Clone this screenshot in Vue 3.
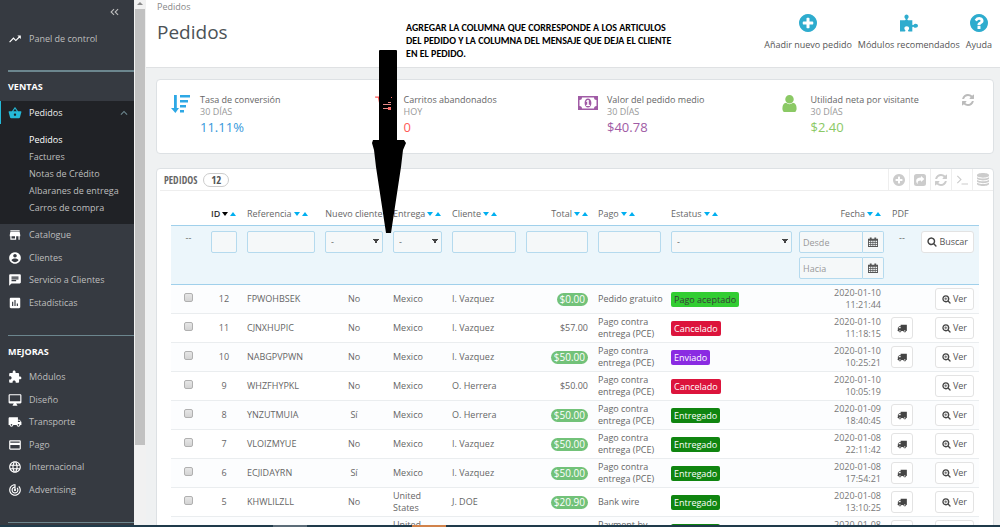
<script setup>
import { h, ref } from 'vue'

const icons = {
  trend: { d: 'M16 6l2.29 2.29-4.88 4.88-4-4L2 16.59 3.41 18l6-6 4 4 6.3-6.29L22 12V6z' },
  basket: { d: 'M17.21 9l-4.38-6.56c-.19-.28-.51-.42-.83-.42-.32 0-.64.14-.83.43L6.79 9H2c-.55 0-1 .45-1 1 0 .09.01.18.04.27l2.54 9.27c.23.84 1 1.46 1.92 1.46h13c.92 0 1.69-.62 1.93-1.46l2.54-9.27L23 10c0-.55-.45-1-1-1h-4.79zM9 9l3-4.4L15 9H9zm3 8c-1.1 0-2-.9-2-2s.9-2 2-2 2 .9 2 2-.9 2-2 2z' },
  up: { d: 'M7.41 15.41L12 10.83l4.59 4.58L18 14l-6-6-6 6z' },
  store: { d: 'M20 4H4v2h16V4zm1 10v-2l-1-5H4l-1 5v2h1v6h10v-6h4v6h2v-6h1zm-9 4H6v-4h6v4z' },
  account: { d: 'M12 2C6.48 2 2 6.48 2 12s4.48 10 10 10 10-4.48 10-10S17.52 2 12 2zm0 3c1.66 0 3 1.34 3 3s-1.34 3-3 3-3-1.34-3-3 1.34-3 3-3zm0 14.2c-2.5 0-4.71-1.28-6-3.22.03-1.99 4-3.08 6-3.08 1.99 0 5.97 1.09 6 3.08-1.29 1.94-3.5 3.22-6 3.22z' },
  chat: { d: 'M20 2H4c-1.1 0-1.99.9-1.99 2L2 22l4-4h14c1.1 0 2-.9 2-2V4c0-1.1-.9-2-2-2zM6 9h12v2H6V9zm8 5H6v-2h8v2zm4-6H6V6h12v2z' },
  chart: { d: 'M19 3H5c-1.1 0-2 .9-2 2v14c0 1.1.9 2 2 2h14c1.1 0 2-.9 2-2V5c0-1.1-.9-2-2-2zM9 17H7v-7h2v7zm4 0h-2V7h2v10zm4 0h-2v-4h2v4z' },
  extension: { d: 'M20.5 11H19V7c0-1.1-.9-2-2-2h-4V3.5C13 2.12 11.88 1 10.5 1S8 2.12 8 3.5V5H4c-1.1 0-1.99.9-1.99 2v3.8H3.5c1.49 0 2.7 1.21 2.7 2.7s-1.21 2.7-2.7 2.7H2V20c0 1.1.9 2 2 2h3.8v-1.5c0-1.49 1.21-2.7 2.7-2.7 1.49 0 2.7 1.21 2.7 2.7V22H17c1.1 0 2-.9 2-2v-4h1.5c1.38 0 2.5-1.12 2.5-2.5S21.88 11 20.5 11z' },
  desktop: { d: 'M21 2H3c-1.1 0-2 .9-2 2v12c0 1.1.9 2 2 2h7l-2 3v1h8v-1l-2-3h7c1.1 0 2-.9 2-2V4c0-1.1-.9-2-2-2zm0 12H3V4h18v10z' },
  shipping: { d: 'M20 8h-3V4H3c-1.1 0-2 .9-2 2v11h2c0 1.66 1.34 3 3 3s3-1.34 3-3h6c0 1.66 1.34 3 3 3s3-1.34 3-3h2v-5l-3-4zM6 18.5c-.83 0-1.5-.67-1.5-1.5s.67-1.5 1.5-1.5 1.5.67 1.5 1.5-.67 1.5-1.5 1.5zm13.5-9l1.96 2.5H17V9.5h2.5zm-1.5 9c-.83 0-1.5-.67-1.5-1.5s.67-1.5 1.5-1.5 1.5.67 1.5 1.5-.67 1.5-1.5 1.5z' },
  payment: { d: 'M20 4H4c-1.11 0-1.99.89-1.99 2L2 18c0 1.11.89 2 2 2h16c1.11 0 2-.89 2-2V6c0-1.11-.89-2-2-2zm0 14H4v-6h16v6zm0-10H4V6h16v2z' },
  globe: { d: 'M11.99 2C6.47 2 2 6.48 2 12s4.47 10 9.99 10C17.52 22 22 17.52 22 12S17.52 2 11.99 2zm6.93 6h-2.95c-.32-1.25-.78-2.45-1.38-3.56 1.84.63 3.37 1.91 4.33 3.56zM12 4.04c.83 1.2 1.48 2.53 1.91 3.96h-3.82c.43-1.43 1.08-2.76 1.91-3.96zM4.26 14C4.1 13.36 4 12.69 4 12s.1-1.36.26-2h3.38c-.08.66-.14 1.32-.14 2 0 .68.06 1.34.14 2H4.26zm.82 2h2.95c.32 1.25.78 2.45 1.38 3.56-1.84-.63-3.37-1.9-4.33-3.56zm2.95-8H5.08c.96-1.66 2.49-2.93 4.33-3.56C8.81 5.55 8.35 6.75 8.03 8zM12 19.96c-.83-1.2-1.48-2.53-1.91-3.96h3.82c-.43 1.43-1.08 2.76-1.91 3.96zM14.34 14H9.66c-.09-.66-.16-1.32-.16-2 0-.68.07-1.35.16-2h4.68c.09.65.16 1.32.16 2 0 .68-.07 1.34-.16 2zm.25 5.56c.6-1.11 1.06-2.31 1.38-3.56h2.95c-.96 1.65-2.49 2.93-4.33 3.56zM16.36 14c.08-.66.14-1.32.14-2 0-.68-.06-1.34-.14-2h3.38c.16.64.26 1.31.26 2s-.1 1.36-.26 2h-3.38z' },
  target: { d: 'M19.07 4.93l-1.41 1.41C19.1 7.79 20 9.79 20 12c0 4.42-3.58 8-8 8s-8-3.58-8-8c0-4.08 3.05-7.44 7-7.93v2.02C8.16 6.57 6 9.03 6 12c0 3.31 2.69 6 6 6s6-2.69 6-6c0-1.66-.67-3.16-1.76-4.24l-1.41 1.41C15.55 9.9 16 10.9 16 12c0 2.21-1.79 4-4 4s-4-1.79-4-4c0-1.86 1.28-3.41 3-3.86v2.14c-.6.35-1 .98-1 1.72 0 1.1.9 2 2 2s2-.9 2-2c0-.74-.4-1.38-1-1.72V2h-1C6.48 2 2 6.48 2 12s4.48 10 10 10 10-4.48 10-10c0-2.76-1.12-5.26-2.93-7.07z' },
  plus: { box: '128 128 1536 1536', d: 'M1344 960v-128q0-26-19-45t-45-19h-256v-256q0-26-19-45t-45-19h-128q-26 0-45 19t-19 45v256h-256q-26 0-45 19t-19 45v128q0 26 19 45t45 19h256v256q0 26 19 45t45 19h128q26 0 45-19t19-45v-256h256q26 0 45-19t19-45zm320-64q0 209-103 385.5t-279.5 279.5-385.5 103-385.5-103-279.5-279.5-103-385.5 103-385.5 279.5-279.5 385.5-103 385.5 103 279.5 279.5 103 385.5z' },
  help: { box: '128 128 1536 1536', d: 'M1024 1376v-192q0-14-9-23t-23-9h-192q-14 0-23 9t-9 23v192q0 14 9 23t23 9h192q14 0 23-9t9-23zm256-672q0-88-55.5-163t-138.5-116-170-41q-243 0-371 213-15 24 8 42l132 100q7 6 19 6 16 0 25-12 53-68 86-92 34-24 86-24 48 0 85.5 26t37.5 59q0 38-20 61t-68 45q-63 28-115.5 86.5t-52.5 125.5v36q0 14 9 23t23 9h192q14 0 23-9t9-23q0-19 21.5-49.5t54.5-49.5q32-18 49-28.5t46-35 44.5-48 28-60.5 12.5-81zm384 192q0 209-103 385.5t-279.5 279.5-385.5 103-385.5-103-279.5-279.5-103-385.5 103-385.5 279.5-279.5 385.5-103 385.5 103 279.5 279.5 103 385.5z' },
  puzzle: { box: '0 0 19 18', d: 'M0 6h5.2c.8 0 1-.5.7-1.1C5.2 4 4.700 3.500 4.700 2.400 4.700 1 5.700 0 6.900 0s2.200 1 2.200 2.400c0 1.100-.5 1.600-1.200 2.500-.3.6-.1 1.100.7 1.100H13v4.200c0 1 .7 1.200 1.400.6.6-.6 1.100-.9 2-.9 1.400 0 2.600.9 2.600 2.100s-1.200 2.100-2.600 2.100c-.9 0-1.400-.3-2-.9-.7-.6-1.400-.4-1.400.6V18H9.300c-1-.3-1.100-1-.5-1.600.6-.7.8-1.100.8-1.900 0-1.300-1-2.100-2.500-2.100s-2.500.8-2.500 2.100c0 .8.200 1.200.8 1.900.6.6.5 1.300-.5 1.600H0z' },
  refresh: { box: '128 128 1536 1536', d: 'M1639 1056q0 5-1 7-64 268-268 434.5t-478 166.5q-146 0-282.5-55t-243.5-157l-129 129q-19 19-45 19t-45-19-19-45v-448q0-26 19-45t45-19h448q26 0 45 19t19 45-19 45l-137 137q71 66 161 102t187 36q134 0 250-65t186-179q11-17 53-117 8-23 30-23h192q13 0 22.5 9.5t9.5 22.5zm25-800v448q0 26-19 45t-45 19h-448q-26 0-45-19t-19-45 19-45l138-138q-148-137-349-137-134 0-250 65t-186 179q-11 17-53 117-8 23-30 23h-199q-13 0-22.5-9.5t-9.5-22.5v-7q65-268 270-434.5t480-166.5q146 0 284 55.5t245 156.5l130-129q19-19 45-19t45 19 19 45z' },
  share: { box: '0 0 12 12', d: 'M2.500 0h7A2.500 2.500 0 0 1 12 2.500v7A2.500 2.500 0 0 1 9.500 12h-7A2.500 2.500 0 0 1 0 9.500v-7A2.500 2.500 0 0 1 2.500 0zM7 2v1.600C3.500 3.600 2.200 5 2.200 7c0 1.300.7 2.300 1.500 3C3.400 7.500 4.200 6.400 7 6.400V8l3.400-3z' },
  terminal: { box: '0 0 13 12', d: 'M1 2l.9-.9L6.200 5.500 1.900 9.900 1 9l3.500-3.500zM6 9.700h7V11H6z' },
  database: { box: '0 0 12 13', d: 'M6 0c3.300 0 6 .9 6 2v.8C12 3.900 9.300 4.700 6 4.700S0 3.900 0 2.800V2C0 .9 2.700 0 6 0zM0 4.300c1.300.9 3.600 1.200 6 1.200s4.700-.3 6-1.200v1.300c0 1.100-2.700 1.900-6 1.900S0 6.700 0 5.600zM0 7c1.300.9 3.600 1.300 6 1.300S10.700 7.900 12 7v1.300c0 1.100-2.700 1.900-6 1.900S0 9.400 0 8.300zM0 9.700c1.300.9 3.600 1.300 6 1.300s4.700-.4 6-1.300V11c0 1.100-2.700 2-6 2s-6-.9-6-2z' },
  calendar: { box: '0 0 11 11', d: 'M0 2h2V.500h2V2h3V.500h2V2h2v9H0zM1 4v1.500h1.600V4zm2.400 0v1.500H5V4zm2.400 0v1.500h1.700V4zm2.500 0v1.500H10V4zM1 6.200v1.500h1.600V6.200zm2.400 0v1.500H5V6.200zm2.400 0v1.500h1.700V6.200zm2.500 0v1.500H10V6.200zM1 8.400v1.500h1.600V8.400zm2.400 0v1.500H5V8.400zm2.400 0v1.500h1.700V8.400zm2.500 0v1.500H10V8.400z' },
  search: { box: '0 64 1792 1792', d: 'M1216 832q0-185-131.5-316.5t-316.5-131.5-316.5 131.5-131.5 316.5 131.5 316.5 316.5 131.5 316.5-131.5 131.5-316.5zm512 832q0 52-38 90t-90 38q-54 0-90-38l-343-342q-179 124-399 124-143 0-273.5-55.5t-225-150-150-225-55.5-273.5 55.5-273.5 150-225 225-150 273.5-55.5 273.5 55.5 225 150 150 225 55.5 273.5q0 220-124 399l343 343q37 37 37 90z' },
  zoom: { box: '0 64 1792 1792', d: 'M1088 800v64q0 13-9.5 22.5t-22.5 9.5h-224v224q0 13-9.5 22.5t-22.5 9.5h-64q-13 0-22.5-9.5t-9.5-22.5v-224h-224q-13 0-22.5-9.5t-9.5-22.5v-64q0-13 9.5-22.5t22.5-9.5h224v-224q0-13 9.5-22.5t22.5-9.5h64q13 0 22.5 9.5t9.5 22.5v224h224q13 0 22.5 9.5t9.5 22.5zm128 32q0-185-131.5-316.5t-316.5-131.5-316.5 131.5-131.5 316.5 131.5 316.5 316.5 131.5 316.5-131.5 131.5-316.5zm512 832q0 52-38 90t-90 38q-54 0-90-38l-343-342q-179 124-399 124-143 0-273.5-55.5t-225-150-150-225-55.5-273.5 55.5-273.5 150-225 225-150 273.5-55.5 273.5 55.5 225 150 150 225 55.5 273.5q0 220-124 399l343 343q37 37 37 90z' },
  truck: { box: '0 128 1792 1664', d: 'M640 1408q0-52-38-90t-90-38-90 38-38 90 38 90 90 38 90-38 38-90zm-384-512h384v-256h-158q-13 0-22 9l-195 195q-9 9-9 22v30zm1280 512q0-52-38-90t-90-38-90 38-38 90 38 90 90 38 90-38 38-90zm256-1088v1024q0 15-4 26.5t-13.5 18.5-16.5 11.5-23.5 6-22.5 2-25.5 0-22.5-.5q0 106-75 181t-181 75-181-75-75-181h-384q0 106-75 181t-181 75-181-75-75-181h-64q-3 0-22.5.5t-25.5 0-22.5-2-23.5-6-16.5-11.5-13.5-18.5-4-26.5q0-26 19-45t45-19v-320q0-8-.5-35t0-38 2.5-34.5 6.5-37 14-30.5 22.5-30l198-198q19-19 50.5-32t58.5-13h160v-192q0-26 19-45t45-19h1024q26 0 45 19t19 45z' },
  sort: { box: '0 0 20 20', d: 'M3 1h2.800v13H8l-3.600 5L0 14h3zM9 1h10v2.600H9zm0 5h8v2.600H9zm0 5h6v2.600H9zm0 5h4v2.600H9z' },
  cart: { box: '64 256 1664 1408', d: 'M704 1536q0 52-38 90t-90 38-90-38-38-90 38-90 90-38 90 38 38 90zm896 0q0 52-38 90t-90 38-90-38-38-90 38-90 90-38 90 38 38 90zm128-1088v512q0 24-16.5 42.5t-40.5 21.5l-1044 122q13 60 13 70 0 16-24 64h920q26 0 45 19t19 45-19 45-45 19h-1024q-26 0-45-19t-19-45q0-11 8-31.5t16-36 21.5-40 15.5-29.5l-177-823h-204q-26 0-45-19t-19-45 19-45 45-19h256q16 0 28.5 6.5t19.5 15.5 13 24.5 8 26 5.5 29.5 4.5 26h1201q26 0 45 19t19 45z' },
  money: { box: '0 0 20 14', d: 'M0 0h20v14H0zM4 1.500A2.500 2.500 0 0 1 1.500 4v6A2.500 2.500 0 0 1 4 12.500h12a2.500 2.500 0 0 1 2.500-2.500V4A2.500 2.500 0 0 1 16 1.500zM10 2.500c2 0 3.400 2 3.400 4.500s-1.400 4.500-3.400 4.500S6.600 9.500 6.600 7 8 2.500 10 2.500zM9.400 4L8 5.200l.6.8.6-.4v3.200H8.100V10h3.900V8.800h-1.200V4z' },
  user: { box: '256 128 1280 1536', d: 'M1536 1399q0 109-62.500 187t-150.500 78h-854q-88 0-150.500-78t-62.500-187q0-85 8.500-160.500t31.500-152 58.500-131 94-89 134.500-34.500q131 128 313 128t313-128q76 0 134.500 34.500t94 89 58.500 131 31.500 152 8.500 160.500zm-256-887q0 159-112.500 271.500t-271.500 112.500-271.500-112.500-112.500-271.500 112.500-271.500 271.500-112.500 271.500 112.500 112.500 271.500z' }
}

const Icon = (props) => {
  const icon = icons[props.name]
  return h('svg', { viewBox: icon.box || '0 0 24 24', fill: 'currentColor', 'fill-rule': 'evenodd', 'aria-hidden': 'true' }, [h('path', { d: icon.d })])
}
Icon.props = ['name']

const submenu = ['Pedidos', 'Factures', 'Notas de Crédito', 'Albaranes de entrega', 'Carros de compra']
const sales = [
  { icon: 'store', label: 'Catalogue' },
  { icon: 'account', label: 'Clientes' },
  { icon: 'chat', label: 'Servicio a Clientes' },
  { icon: 'chart', label: 'Estadísticas' }
]
const improve = [
  { icon: 'extension', label: 'Módulos' },
  { icon: 'desktop', label: 'Diseño' },
  { icon: 'shipping', label: 'Transporte' },
  { icon: 'payment', label: 'Pago' },
  { icon: 'globe', label: 'Internacional' },
  { icon: 'target', label: 'Advertising' }
]
const actions = [
  { icon: 'plus', label: 'Añadir nuevo pedido' },
  { icon: 'puzzle', label: 'Módulos recomendados' },
  { icon: 'help', label: 'Ayuda' }
]
const kpis = [
  { icon: 'sort', title: 'Tasa de conversión', period: '30 DÍAS', value: '11.11%', tone: 'blue' },
  { icon: 'cart', title: 'Carritos abandonados', period: 'HOY', value: '0', tone: 'red' },
  { icon: 'money', title: 'Valor del pedido medio', period: '30 DÍAS', value: '$40.78', tone: 'purple' },
  { icon: 'user', title: 'Utilidad neta por visitante', period: '30 DÍAS', value: '$2.40', tone: 'green' }
]
const tools = [
  { icon: 'plus', label: 'Añadir' },
  { icon: 'share', label: 'Exportar' },
  { icon: 'refresh', label: 'Actualizar' },
  { icon: 'terminal', label: 'Consola SQL' },
  { icon: 'database', label: 'Gestor SQL' }
]
const columns = [
  { key: 'check', label: '' },
  { key: 'id', label: 'ID', sort: true, active: true },
  { key: 'refn', label: 'Referencia', sort: true },
  { key: 'fresh', label: 'Nuevo cliente' },
  { key: 'country', label: 'Entrega', sort: true },
  { key: 'client', label: 'Cliente', sort: true },
  { key: 'total', label: 'Total', sort: true },
  { key: 'pay', label: 'Pago', sort: true },
  { key: 'status', label: 'Estatus', sort: true },
  { key: 'date', label: 'Fecha', sort: true },
  { key: 'pdf', label: 'PDF' },
  { key: 'action', label: '' }
]
const PCE = ['Pago contra', 'entrega (PCE)']
const make = (id, code, fresh, country, client, total, paid, pay, status, tone, day, time, pdf) =>
  ({ id, code, fresh, country, client, total, paid, pay, status, tone, day, time, pdf, checked: false })
const orders = ref([
  make(12, 'FPWOHBSEK', 'No', 'Mexico', 'I. Vazquez', '$0.00', true, ['Pedido gratuito'], 'Pago aceptado', 'accepted', '2020-01-10', '11:21:44', false),
  make(11, 'CJNXHUPIC', 'No', 'Mexico', 'I. Vazquez', '$57.00', false, PCE, 'Cancelado', 'cancelled', '2020-01-10', '11:18:15', true),
  make(10, 'NABGPVPWN', 'No', 'Mexico', 'I. Vazquez', '$50.00', true, PCE, 'Enviado', 'sent', '2020-01-10', '10:25:21', true),
  make(9, 'WHZFHYPKL', 'No', 'Mexico', 'O. Herrera', '$50.00', false, PCE, 'Cancelado', 'cancelled', '2020-01-10', '10:05:19', false),
  make(8, 'YNZUTMUIA', 'Sí', 'Mexico', 'O. Herrera', '$50.00', true, PCE, 'Entregado', 'delivered', '2020-01-09', '18:40:45', true),
  make(7, 'VLOIZMYUE', 'No', 'Mexico', 'I. Vazquez', '$50.00', true, PCE, 'Entregado', 'delivered', '2020-01-08', '22:11:42', true),
  make(6, 'ECJIDAYRN', 'Sí', 'Mexico', 'I. Vazquez', '$50.00', true, PCE, 'Entregado', 'delivered', '2020-01-08', '17:54:21', true),
  make(5, 'KHWLILZLL', 'No', 'United States', 'J. DOE', '$20.90', true, ['Bank wire'], 'Entregado', 'delivered', '2020-01-08', '13:10:25', true),
  make(4, '', 'No', 'United States', '', '$20.90', true, ['Payment by', 'check'], 'Entregado', 'delivered', '2020-01-08', '13:10:25', true)
])
</script>

<template>
  <div class="app">
    <aside class="sidebar">
      <button class="collapse" type="button" aria-label="Contraer menú">
        <svg viewBox="0 0 10 8" fill="none" stroke="currentColor" stroke-width="1.2"><path d="M4.500 .7L1.200 4l3.300 3.300M9 .7L5.700 4 9 7.300" /></svg>
      </button>
      <a class="item dashboard" href="#"><Icon name="trend" class="glyph" />Panel de control</a>
      <h2 class="group">VENTAS</h2>
      <div class="open">
        <a class="item current" href="#"><Icon name="basket" class="glyph" />Pedidos<Icon name="up" class="caret" /></a>
        <ul class="submenu">
          <li v-for="(s, i) in submenu" :key="s"><a href="#" :class="{ on: i === 0 }">{{ s }}</a></li>
        </ul>
      </div>
      <nav class="menu sales">
        <a v-for="m in sales" :key="m.label" class="item" href="#"><Icon :name="m.icon" class="glyph" />{{ m.label }}</a>
      </nav>
      <h2 class="group">MEJORAS</h2>
      <nav class="menu improve">
        <a v-for="m in improve" :key="m.label" class="item" href="#"><Icon :name="m.icon" class="glyph" />{{ m.label }}</a>
      </nav>
      <hr class="rule" />
    </aside>
    <div class="scrollbar"><span class="scroll-up"></span><span class="thumb"></span></div>

    <main class="main">
      <header class="head">
        <div>
          <a class="crumb" href="#">Pedidos</a>
          <h1>Pedidos</h1>
        </div>
        <nav class="actions">
          <a v-for="a in actions" :key="a.label" href="#"><Icon :name="a.icon" class="act-icon" />{{ a.label }}</a>
        </nav>
      </header>

      <div class="content">
        <section class="panel kpis">
          <div v-for="k in kpis" :key="k.title" class="kpi" :class="k.tone">
            <div class="kpi-icon"><Icon :name="k.icon" :class="k.icon" /></div>
            <div>
              <div class="kpi-title">{{ k.title }}</div>
              <div class="kpi-period">{{ k.period }}</div>
              <div class="kpi-value">{{ k.value }}</div>
            </div>
          </div>
          <button class="reload" type="button" aria-label="Actualizar"><Icon name="refresh" /></button>
        </section>

        <section class="panel list">
          <div class="list-head">
            <h3>PEDIDOS</h3>
            <span class="count">12</span>
            <div class="tools">
              <button v-for="t in tools" :key="t.label" type="button" :aria-label="t.label"><Icon :name="t.icon" :class="t.icon" /></button>
            </div>
          </div>
          <table>
            <colgroup><col v-for="c in columns" :key="c.key" :class="'w-' + c.key" /></colgroup>
            <thead>
              <tr>
                <th v-for="c in columns" :key="c.key" :class="[c.key, { active: c.active }]">
                  {{ c.label }}<span v-if="c.sort" class="sorts"><i class="down"></i><i class="asc"></i></span>
                </th>
              </tr>
            </thead>
            <tbody>
              <tr class="filters">
                <td class="check">--</td>
                <td><input type="text" aria-label="ID" /></td>
                <td><input type="text" aria-label="Referencia" /></td>
                <td><select aria-label="Nuevo cliente"><option>-</option></select></td>
                <td><select aria-label="Entrega"><option>-</option></select></td>
                <td><input type="text" aria-label="Cliente" /></td>
                <td><input type="text" aria-label="Total" /></td>
                <td><input type="text" aria-label="Pago" /></td>
                <td class="state"><select aria-label="Estatus"><option>-</option></select></td>
                <td class="range">
                  <div class="date-field"><input type="text" placeholder="Desde" aria-label="Desde" /><button type="button" aria-label="Elegir desde"><Icon name="calendar" /></button></div>
                  <div class="date-field"><input type="text" placeholder="Hacia" aria-label="Hacia" /><button type="button" aria-label="Elegir hacia"><Icon name="calendar" /></button></div>
                </td>
                <td class="dashes">--</td>
                <td class="action"><button class="btn find" type="button"><Icon name="search" />Buscar</button></td>
              </tr>
              <tr v-for="o in orders" :key="o.id" class="order">
                <td class="check"><input v-model="o.checked" type="checkbox" :aria-label="'Pedido ' + o.id" /></td>
                <td class="id">{{ o.id }}</td>
                <td>{{ o.code }}</td>
                <td class="fresh">{{ o.fresh }}</td>
                <td class="country">{{ o.country }}</td>
                <td>{{ o.client }}</td>
                <td class="total"><span :class="{ pill: o.paid }">{{ o.total }}</span></td>
                <td class="pay"><div v-for="line in o.pay" :key="line">{{ line }}</div></td>
                <td><span class="badge" :class="o.tone">{{ o.status }}</span></td>
                <td class="date">{{ o.day }}<br />{{ o.time }}</td>
                <td class="pdf"><button v-if="o.pdf" class="btn slip" type="button" aria-label="Albarán"><Icon name="truck" /></button></td>
                <td class="action"><button class="btn" type="button"><Icon name="zoom" />Ver</button></td>
              </tr>
            </tbody>
          </table>
        </section>
      </div>
    </main>

    <p class="note">AGREGAR LA COLUMNA QUE CORRESPONDE A LOS ARTICULOS<br />DEL PEDIDO Y LA COLUMNA DEL MENSAJE QUE DEJA EL CLIENTE<br />EN EL PEDIDO.</p>
    <svg class="arrow" viewBox="0 0 34 184" aria-hidden="true">
      <path d="M7 1q0-1 1-1h16q1 0 1 1v89h7l2 3-3 7-2 17L19 183h-5L4 117 2 100 0 93l1-3h6z" />
      <path d="M11 54.500h8M16 52.500h3M11 58.500h5" fill="none" stroke="#e88a88" stroke-width="1" />
      <path d="M16 57h3v3h-3zM19 47h1v1h-1z" fill="#fc6c68" />
    </svg>
    <div class="taskbar"><span class="task muted"></span><span class="task bright"></span></div>
  </div>
</template>

<style>
body { margin: 0; }
</style>

<style scoped>
* { box-sizing: border-box; }
.app { position: relative; display: flex; height: 100vh; overflow: hidden; background: #eff1f2; color: #666; font: 9px/12px "Open Sans", "Noto Sans", sans-serif; }
a { color: inherit; text-decoration: none; }
button, input, select { font: inherit; color: inherit; margin: 0; }
button { padding: 0; border: 0; background: none; }
svg { display: block; flex: none; }
h1, h2, h3, p, ul { margin: 0; padding: 0; }

.sidebar { flex: none; width: 134px; background: #363a41; color: #bebebe; }
.collapse { display: block; margin: 8px 0 0 110px; color: #bebebe; }
.collapse svg { width: 9px; height: 8px; }
.item { display: flex; align-items: center; gap: 7px; padding-left: 8px; }
.glyph { width: 14px; height: 14px; color: #fff; }
.dashboard { height: 24px; margin-top: 11px; }
.group { margin-left: 8px; border-top: 1px solid #6c868e; color: #fff; font-size: 9px; line-height: 12px; font-weight: 700; }
.dashboard + .group { margin-top: 19px; border-top-width: 2px; padding: 9px 0 8px; }
.open { background: #202226; padding-bottom: 8px; }
.current { height: 23px; border-left: 1px solid #25b9d7; padding-left: 7px; color: #eee; }
.current .glyph { color: #25b9d7; }
.caret { width: 14px; height: 14px; margin-left: auto; margin-right: 3px; color: #6c868e; }
.submenu { list-style: none; padding: 7px 0 0 29px; }
.submenu li { line-height: 17px; }
.submenu .on { color: #fff; }
.menu { display: grid; grid-auto-rows: 1fr; }
.sales { min-height: 90px; margin: 0 0 21px; }
.sales + .group { padding: 10px 0 8px; }
.improve { min-height: 135px; }
.rule { margin: 21px 0 0 8px; border: 0; border-top: 1px solid #6c868e; }

.scrollbar { flex: none; width: 12px; padding: 2px 1px 0; background: #f1f1f1; display: flex; flex-direction: column; }
.scroll-up { align-self: center; border: 3px solid transparent; border-top-width: 0; border-bottom-color: #8a8a8a; margin-bottom: 4px; }
.thumb { height: 83%; background: #c1c1c1; }

.main { flex: 1; min-width: 0; display: flex; flex-direction: column; }
.head { display: flex; justify-content: space-between; height: 68px; padding: 1px 8px 0 11px; background: #fff; border-bottom: 1px solid #dfe1e3; flex: none; }
.crumb { display: block; color: #888; }
h1 { margin-top: 6px; font-size: 19px; line-height: 26px; font-weight: 400; color: #4c5256; }
.actions { display: flex; gap: 6px; padding-top: 13px; color: #555; }
.actions a { display: flex; flex-direction: column; align-items: center; gap: 7px; }
.act-icon { width: 18px; height: 18px; color: #2eacce; }

.content { padding: 11px 6px 0 10px; }
.panel { background: #fff; border: 1px solid #dde1e4; border-radius: 4px; }
.kpis { position: relative; display: grid; grid-template-columns: repeat(4, 1fr); min-height: 75px; padding: 14px 8px 0 14px; }
.kpi { display: flex; }
.kpi-icon { width: 29px; }
.kpi-icon .sort { width: 20px; height: 20px; color: #2ea8e5; }
.kpi-icon .cart { width: 18px; height: 16px; margin-top: 2px; }
.kpi-icon .money { width: 20px; height: 14px; margin-top: 2px; }
.kpi-icon .user { width: 15px; height: 17px; margin-top: 1px; }
.kpi-title { color: #666; }
.kpi-period { color: #999; }
.kpi-value { font-size: 13px; line-height: 18px; }
.blue { color: #3498db; }
.red { color: #ff5a57; }
.purple { color: #a05ba5; }
.green { color: #8bc965; }
.reload { position: absolute; right: 19px; top: 14px; color: #bbb; }
.reload svg { width: 12px; height: 12px; }

.list { margin-top: 14px; padding-bottom: 14px; }
.list-head { display: flex; align-items: center; height: 22px; margin-left: 3px; padding-left: 4px; border-bottom: 1px solid #eee; }
h3 { font: 300 10px/12px "Open Sans Condensed", "Open Sans", sans-serif; color: #666; }
.count { margin-left: 6px; width: 26px; line-height: 12px; border: 1px solid #ccc; border-radius: 8px; text-align: center; font-family: "Open Sans Condensed", "Open Sans", sans-serif; font-size: 11px; font-weight: 700; color: #555; }
.tools { display: flex; align-self: stretch; margin-left: auto; }
.tools button { display: flex; align-items: center; justify-content: center; width: 21px; border-left: 1px solid #eee; color: #ccc; }
.tools svg { width: 12px; height: 12px; }
.tools .database { height: 13px; }

table { table-layout: fixed; border-collapse: separate; border-spacing: 0; width: calc(100% - 28px); margin: 0 14px; }
.w-check { width: 35px; }
.w-id { width: 36px; }
.w-refn { width: 78px; }
.w-fresh { width: 68px; }
.w-country { width: 59px; }
.w-client { width: 74px; }
.w-total { width: 72px; }
.w-pay { width: 73px; }
.w-status { width: 128px; }
.w-date { width: 93px; }
.w-pdf { width: 30px; }
.w-action { width: 62px; }
th { height: 35px; padding: 11px 0 0 5px; text-align: left; font-weight: 400; white-space: nowrap; border-bottom: 1px solid #a0d0eb; }
th.active { font-weight: 600; color: #333; }
th.fresh { text-align: center; padding-right: 5px; }
th.total { text-align: right; padding-right: 5px; }
th.date { text-align: right; padding-right: 6px; }
.sorts { display: inline-flex; gap: 2px; margin-left: 2px; vertical-align: 1px; }
.sorts i { border: 3px solid transparent; }
.sorts .down { border-bottom-width: 0; border-top: 4px solid #00aff0; }
.sorts .asc { border-top-width: 0; border-bottom: 4px solid #00aff0; }
.active .down { border-top-color: #000; }
td { padding: 0 5px; vertical-align: middle; }
td.check { text-align: center; }

.filters td { height: 59px; padding-top: 5px; vertical-align: top; background: #ecf6fb; border-bottom: 1px solid #a0d0eb; }
.filters .check, .filters .dashes { padding-top: 6px; }
.filters .dashes { text-align: center; }
.filters input, .filters select, .date-field button { display: block; width: 100%; height: 22px; border: 1px solid #b5daee; border-radius: 2px; background-color: #f5f8f9; padding: 0 4px; outline: 0; }
.filters select {
  appearance: none;
  padding: 0 5px;
  background-image: linear-gradient(to top right, transparent 50%, #444 51%), linear-gradient(to top left, transparent 50%, #444 51%);
  background-repeat: no-repeat;
  background-size: 3px 5px;
  background-position: right 6px top 7px, right 3px top 7px;
}
.filters .state { padding-right: 2px; }
.date-field { display: flex; margin-bottom: 4px; }
.date-field input { flex: 1; min-width: 0; padding: 0 3px; border-radius: 2px 0 0 2px; }
.date-field input::placeholder { color: #999; opacity: 1; }
.date-field button { flex: none; width: 21px; padding: 0 5px; border-left: 0; border-radius: 0 2px 2px 0; color: #555; }
.date-field svg { width: 10px; height: 10px; }
.filters .range { padding-right: 3px; }

.btn { display: inline-flex; align-items: center; justify-content: center; gap: 2px; height: 22px; padding: 0 6px; background: #fff; border: 1px solid #e3e3e3; border-radius: 3px; color: #555; vertical-align: top; }
.btn svg { width: 9px; height: 9px; color: #444; }
.find { padding: 0 5px; }
.find svg { width: 10px; height: 10px; }
.slip { width: 22px; padding: 0; }
.slip svg { width: 10px; height: 9px; }
td.pdf { padding: 0 4px; }
td.action { text-align: right; padding-left: 0; }

.order td { height: 29px; border-bottom: 1px solid #eaedef; }
.order:nth-child(even) td { background: #fcfdfe; }
.order input { appearance: none; display: block; width: 9px; height: 9px; margin: -4px auto 0; border: 1px solid #b0b0b0; border-radius: 2px; background: linear-gradient(#e6e6e6, #d4d4d4); }
.order .id, .order .fresh { text-align: center; }
.order .country { padding-right: 15px; }
.order .total { text-align: right; }
.order .pay { padding-right: 0; white-space: nowrap; }
.order .date { text-align: right; padding-right: 6px; color: #777; }
.pill { display: inline-block; padding: 0 3px; border-radius: 7px; line-height: 13px; font-size: 10px; background: #72c279; color: #fff; vertical-align: middle; }
.badge { display: inline-block; padding: 0 3px; border-radius: 2px; line-height: 15px; color: #fff; vertical-align: middle; }
.accepted { background: #32cd32; color: #383838; }
.cancelled { background: #dc143c; }
.sent { background: #8a2be2; }
.delivered { background: #108510; }

.note { position: absolute; left: 406px; top: 21px; font: 700 10px/13px Carlito, Lato, sans-serif; color: #000; white-space: nowrap; }
.arrow { position: absolute; left: 372px; top: 50px; width: 34px; height: 184px; }
.taskbar { position: absolute; left: 0; right: 0; bottom: 0; height: 2px; background: #1f3a4a; }
.task { position: absolute; top: 0; height: 2px; width: 34px; }
.muted { left: 273px; background: #5b6c78; }
.bright { left: 412px; background: #d0824a; }
</style>
